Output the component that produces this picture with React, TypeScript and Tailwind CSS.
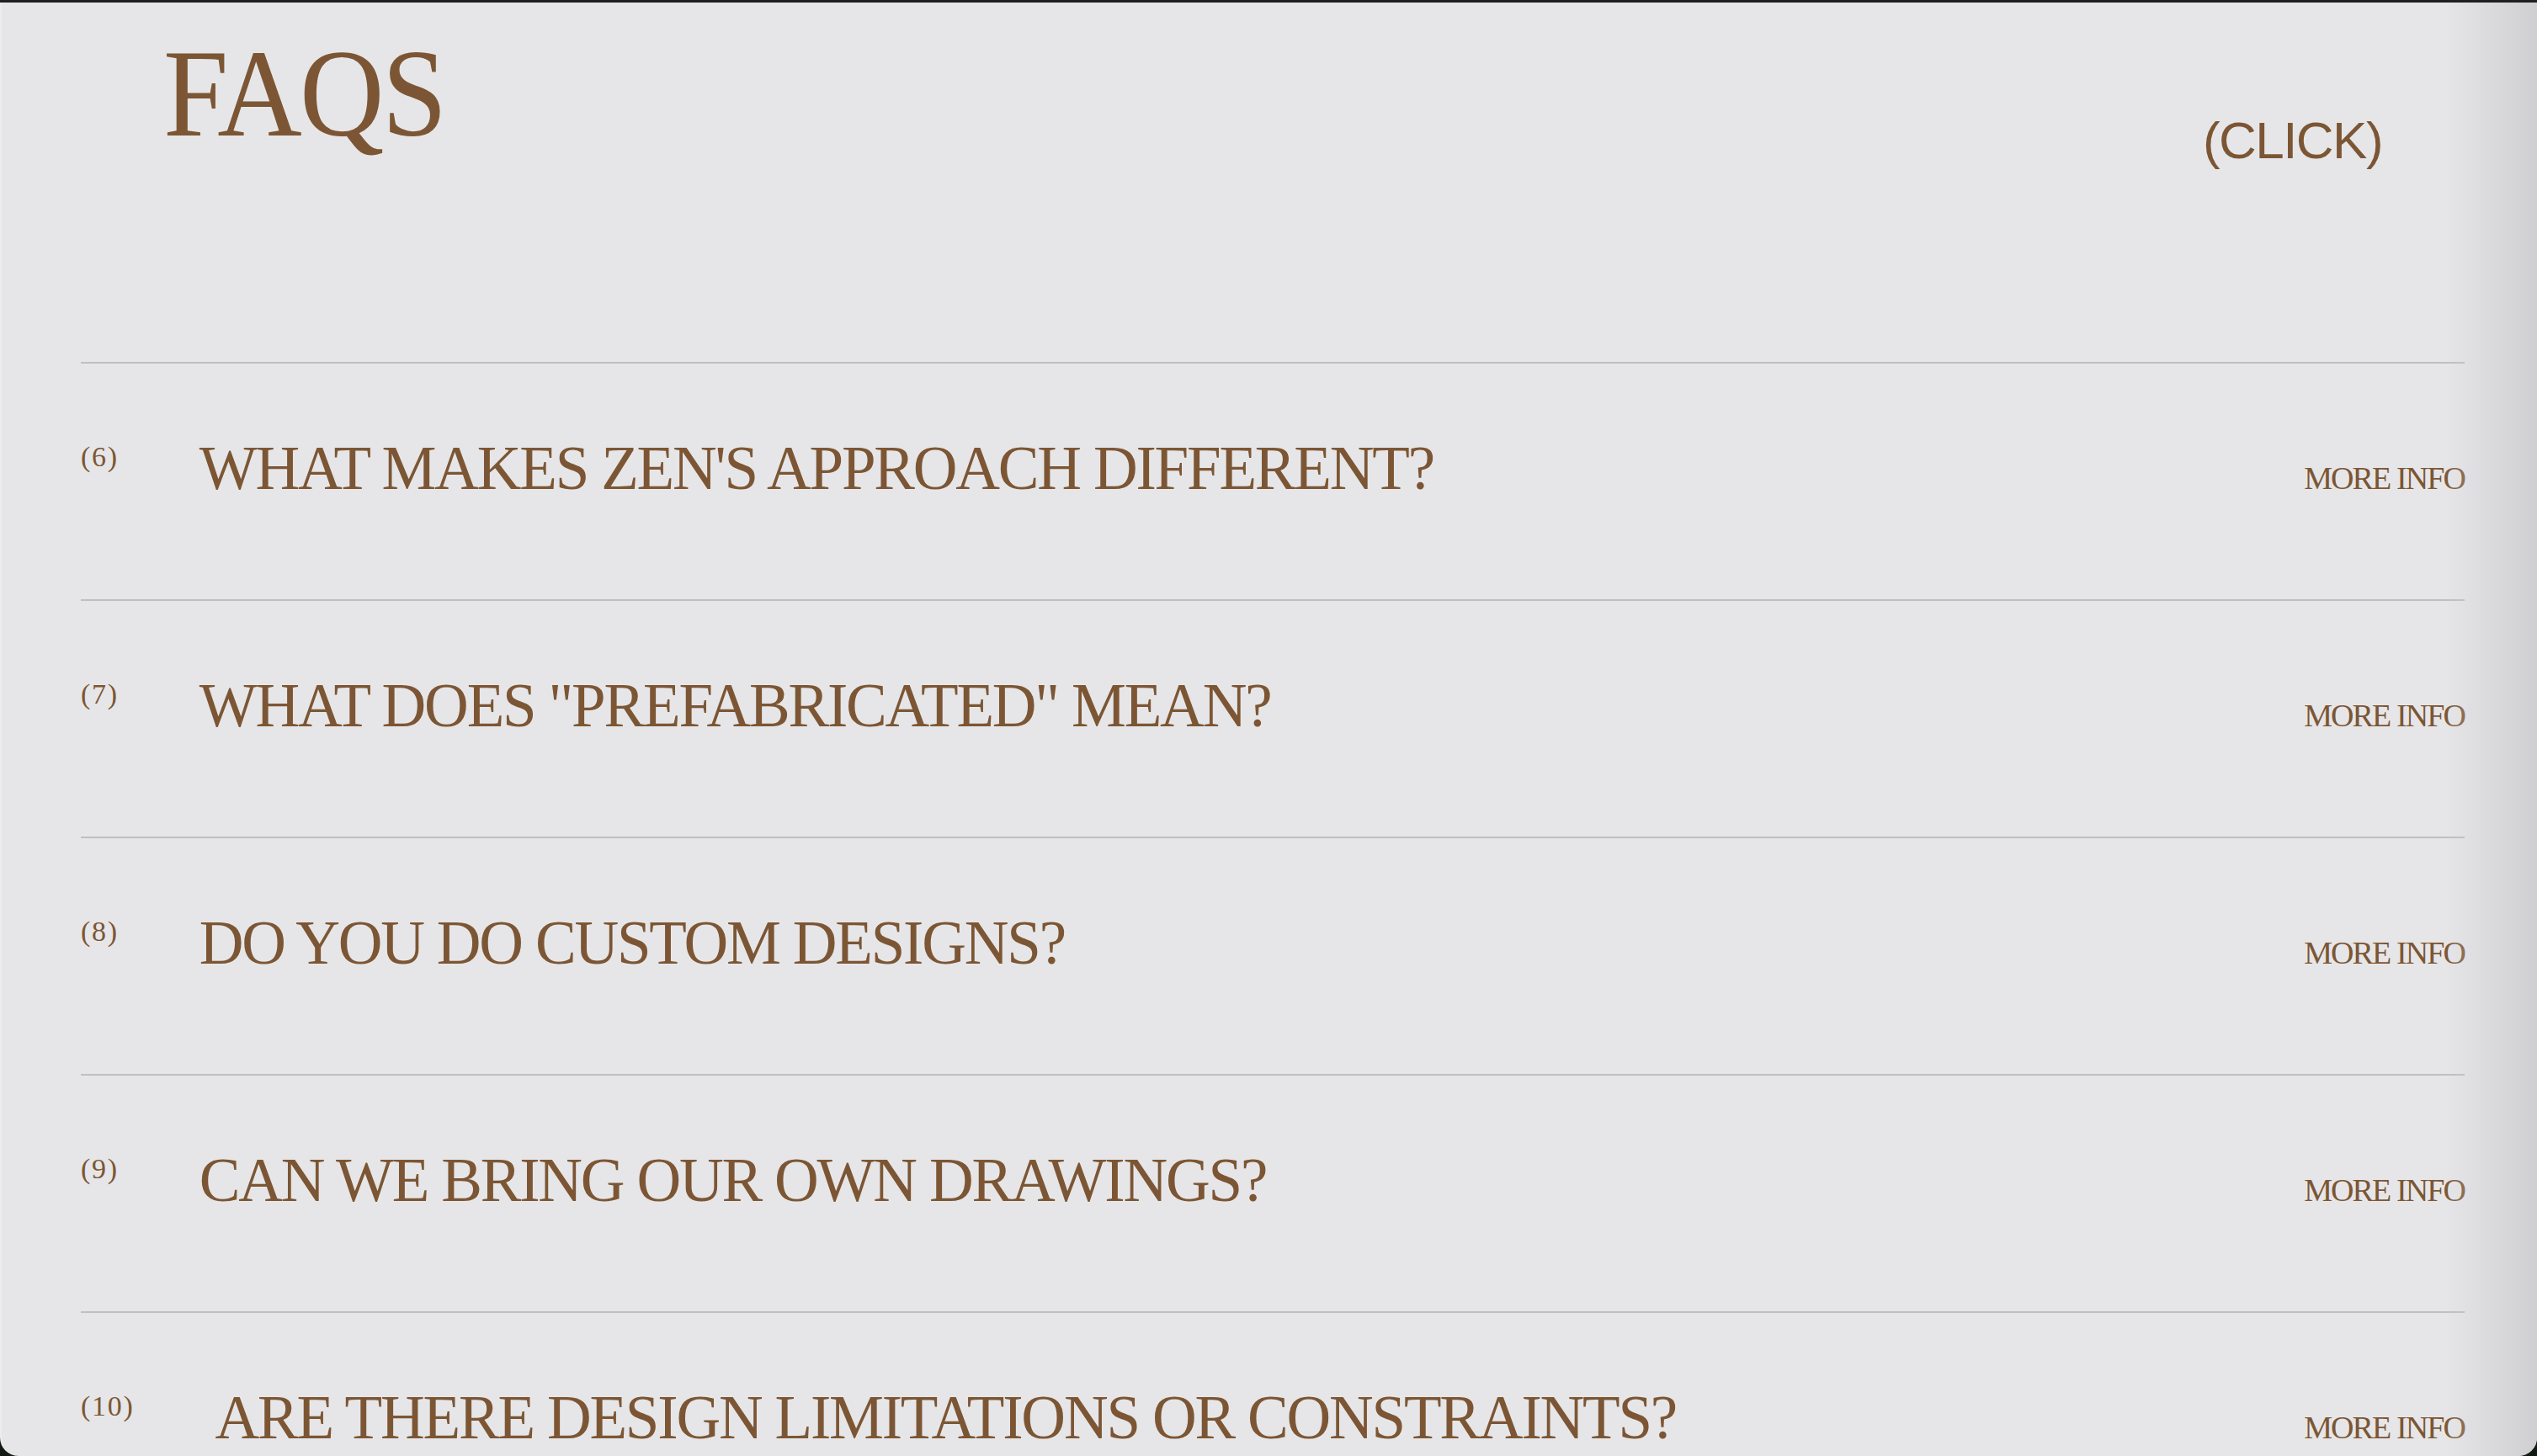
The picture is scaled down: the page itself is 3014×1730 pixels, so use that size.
import React from "react";

const faqs = [
  { n: "(6)", q: "WHAT MAKES ZEN'S APPROACH DIFFERENT?" },
  { n: "(7)", q: 'WHAT DOES "PREFABRICATED" MEAN?' },
  { n: "(8)", q: "DO YOU DO CUSTOM DESIGNS?" },
  { n: "(9)", q: "CAN WE BRING OUR OWN DRAWINGS?" },
  { n: "(10)", q: "ARE THERE DESIGN LIMITATIONS OR CONSTRAINTS?" },
];

export default function App() {
  return (
    <div className="w-[3014px] h-[1730px] bg-[#131a13] overflow-hidden">
      <div className="h-[3px] bg-[#1e1f1e]" />
      <div className="relative h-[1727px] bg-[#e6e6e8] rounded-b-[22px] overflow-hidden border-l-2 border-[#ececee] text-[#7c5634] font-['Liberation_Serif',serif]">
        <div className="absolute inset-y-0 right-0 w-[110px] bg-linear-to-r from-[#e6e6e8]/0 to-[#cfcfd1] pointer-events-none" />
        <div className="pl-[94px] pr-[86px]">
          <header className="h-[427px] flex justify-between items-start">
            <h1 className="mt-[34px] ml-[98px] text-[148px] leading-none font-normal tracking-[-0.02em] scale-x-[0.94] origin-left">
              FAQS
            </h1>
            <div className="mt-[133px] mr-[98px] text-[62px] leading-none font-['Liberation_Sans',sans-serif] tracking-[-0.025em]">
              (CLICK)
            </div>
          </header>
          {faqs.map((f) => (
            <div
              key={f.n}
              className="h-[282px] border-t-2 border-[#bfbfc1] pt-[88px] flex items-start gap-[96px]"
            >
              <div className="mt-[6px] text-[34px] leading-none tracking-[0.05em]">
                {f.n}
              </div>
              <div className="flex-1 flex items-baseline justify-between">
                <div className="text-[73px] leading-none tracking-[-0.03em]">
                  {f.q}
                </div>
                <div className="text-[38px] leading-none tracking-[-0.05em]">
                  MORE INFO
                </div>
              </div>
            </div>
          ))}
        </div>
      </div>
    </div>
  );
}
